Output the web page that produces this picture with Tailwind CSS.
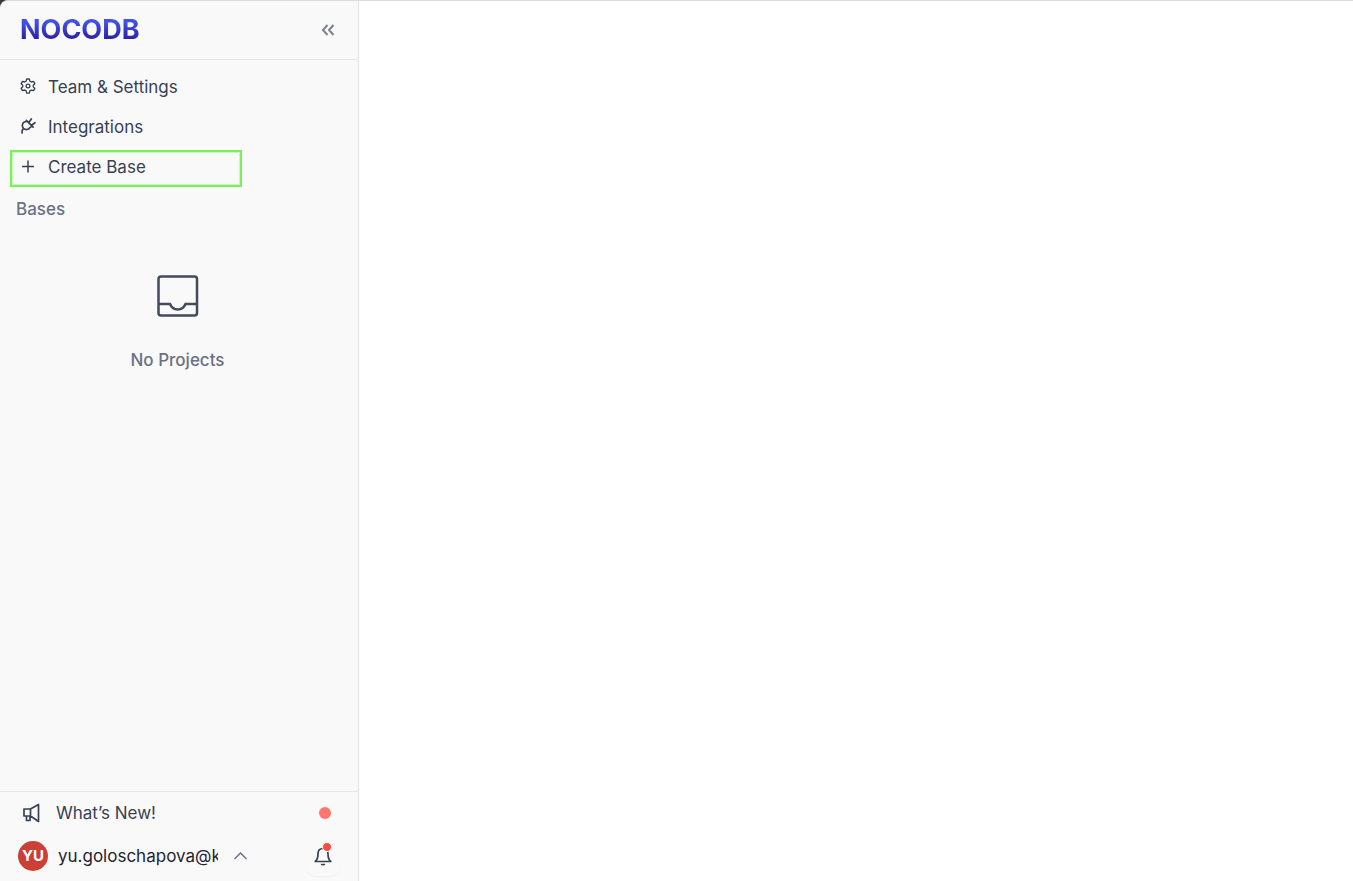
<!DOCTYPE html>
<html lang="en">

<head>
  <meta charset="UTF-8">
  <meta name="viewport" content="width=device-width, initial-scale=1.0">
  <title>NocoDB</title>
  <script src="https://cdn.jsdelivr.net/npm/@tailwindcss/browser@4"></script>
</head>

<body class="bg-[#3a3a3a] font-['Inter',sans-serif] text-[#374151]">

  <div class="flex min-h-screen overflow-hidden rounded-tl-lg border-t border-[#dcdcdc] bg-white">
    <aside class="flex w-[359px] shrink-0 flex-col border-r border-[#e3e3e5] bg-[#f9f9fa]">

      <header class="flex h-[59px] items-center justify-between border-b border-[#e7e7e9] pl-5 pr-[22px]">
        <a href="#" class="bg-linear-to-b from-[#4351e8] from-25% to-[#2b1f9f] to-80% bg-clip-text text-[27px] leading-8 font-bold text-transparent">NOCODB</a>
        <button type="button" aria-label="Collapse sidebar">
          <svg class="size-4" viewBox="0 0 16 16" fill="none" stroke="#80828c" stroke-width="2">
            <path d="M7.500 3 3 8l4.500 5M13.500 3 9 8l4.500 5" />
          </svg>
        </button>
      </header>

      <nav class="flex flex-col px-[10px] pt-2 text-[17px]">
        <button type="button" class="flex h-9 items-center gap-3 pl-[10px] text-left">
          <svg class="size-4" viewBox="0 0 24 24" fill="none" stroke="#374151" stroke-width="2" stroke-linejoin="round">
            <path d="M10 1.500h4l.8 3.200 2.300 1.300 3.200-.9 2 3.400-2.400 2.400v2.400l2.400 2.300-2 3.400-3.200-.9-2.300 1.300-.8 3.200h-4l-.8-3.200L6.900 18l-3.200.9-2-3.400 2.400-2.300v-2.400L1.700 8.500l2-3.400 3.200.9 2.300-1.300z" />
            <circle cx="12" cy="12" r="2.800" />
          </svg>
          <span class="pt-1">Team &amp; Settings</span>
        </button>
        <button type="button" class="mt-1 flex h-9 items-center gap-3 pl-[10px] text-left">
          <svg class="size-4" viewBox="0 0 16 16" fill="none" stroke="#374151" stroke-width="1.700" stroke-linecap="round" stroke-linejoin="round">
            <path d="M6.300 2.300 13.100 9.100M7.200 3.200 4.300 4C1.900 5.400 1.800 8.500 3.500 10.300c1.800 1.800 5 1.700 6.400-.7l2.200-1.500M8.800 4.500 11.300 1M11.500 7.200 15 4.700M3.700 10.500c-1.500 1.100-2 2.700-1.500 4.500" />
          </svg>
          <span class="pt-1">Integrations</span>
        </button>
        <button type="button" class="mt-[6px] flex h-[37px] w-[232px] items-center gap-3 border-2 border-[#7bf05a] pb-1 pl-2 text-left shadow-[inset_0_0_0_1px_#c9f7bc]">
          <svg class="size-4" viewBox="0 0 16 16" fill="none" stroke="#374151" stroke-width="1.500">
            <path d="M8 1.500v12M2 7.500h12" />
          </svg>
          <span class="pt-[2px]">Create Base</span>
        </button>
      </nav>

      <h2 class="mt-[10px] px-4 text-[17px] leading-6 font-medium text-[#6a7184]">Bases</h2>

      <div class="flex flex-1 flex-col items-center pt-[51px] pr-[3px]">
        <svg class="size-12" viewBox="0 0 48 48" fill="none" stroke="#434a5e" stroke-width="2.500">
          <rect x="4.500" y="4.500" width="38.500" height="39" rx="2.500" />
          <path d="M4.500 32h11.500c1.500 3.500 4.500 5.500 7.800 5.500s6.200-2 7.700-5.500h11.500" />
        </svg>
        <p class="mt-7 text-[17px] leading-6 font-medium text-[#6a7184]">No Projects</p>
      </div>

      <footer class="border-t border-[#e7e7e9] text-[17px]">
        <button type="button" class="flex h-[41px] w-full items-center pl-[22px] pr-[27px]">
          <svg class="size-5" viewBox="0 0 20 20" fill="none" stroke="#374151" stroke-width="1.700" stroke-linejoin="round">
            <path d="M16.500 1.500v17L8.500 13V6zM8.500 6H2v7h6.500M4.500 13v4.500H8V13" />
          </svg>
          <span class="ml-[14px] pt-[2px]">What’s New!</span>
          <span class="ml-auto size-3 rounded-full bg-[#ff766d]"></span>
        </button>
        <div class="flex h-12 items-center pb-[2px] pl-[18px] pr-[17px]">
          <button type="button" class="flex items-center text-[#1f2430]">
            <span class="flex size-[30px] items-center justify-center rounded-full bg-[#cb3f36] text-[15px] font-bold text-white">YU</span>
            <span class="ml-[10px] w-40 overflow-hidden pt-[2px] text-left whitespace-nowrap">yu.goloschapova@knime.com</span>
            <svg class="ml-[14px] size-4" viewBox="0 0 16 16" fill="none" stroke="#6a7184" stroke-width="1.500">
              <path d="m2.500 11 6-6 6 6" />
            </svg>
          </button>
          <button type="button" aria-label="Notifications" class="relative ml-auto flex h-10 w-9 items-center justify-center rounded-xl shadow-[0_1px_1px_#f0f0f1]">
            <svg class="size-5" viewBox="0 0 20 20" fill="none" stroke="#374151" stroke-width="1.700" stroke-linejoin="round">
              <path d="M10 2.500C6.500 2.500 5 5 5 8c0 4-1 6-2.800 7.500h15.600C16 14 15 12 15 8c0-3-1.500-5.500-5-5.500zM8.200 18c.8 1 2.800 1 3.600 0" />
            </svg>
            <span class="absolute top-[6px] right-[9px] size-[10px] rounded-full border border-[#f9f9fa] bg-[#ff4a3f]"></span>
          </button>
        </div>
      </footer>
    </aside>

    <main class="flex-1 bg-white"></main>
  </div>

</body>

</html>
